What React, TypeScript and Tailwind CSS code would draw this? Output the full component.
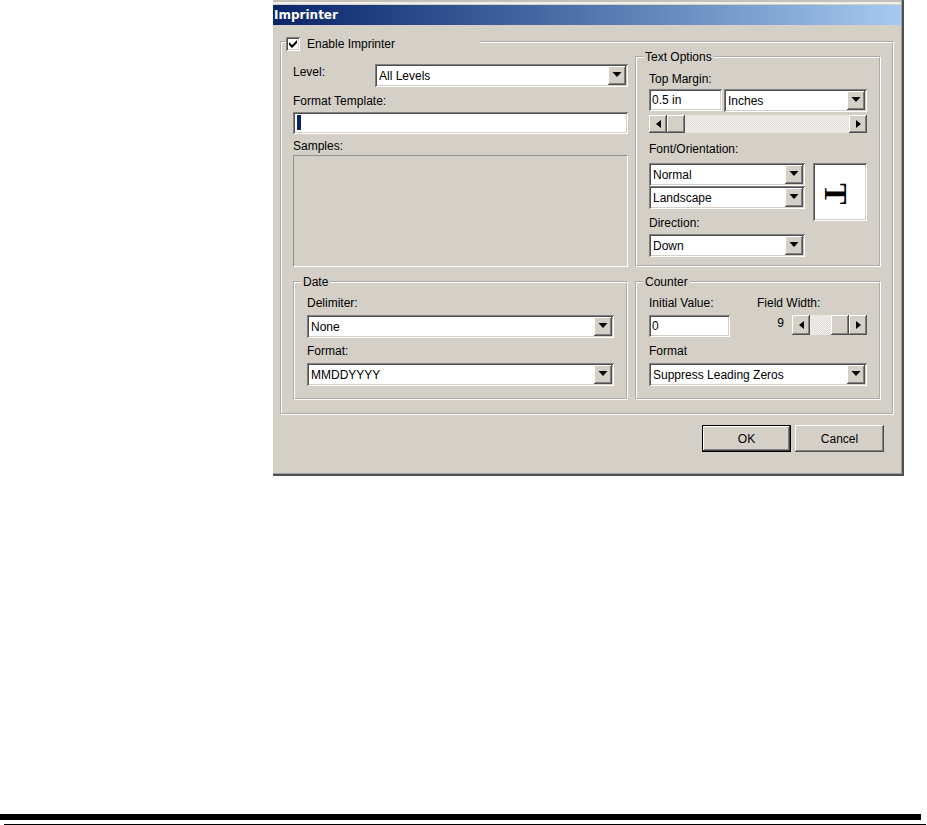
import { useState } from 'react';
import type { ReactNode } from 'react';
import clsx from 'clsx';

const sunken =
    'bg-white shadow-[inset_1px_1px_0_#808080,inset_-1px_-1px_0_#fff,inset_2px_2px_0_#505050,inset_-2px_-2px_0_#d4d0c8]';
const raised =
    'bg-[#d4d0c8] shadow-[inset_-1px_-1px_0_#505050,inset_1px_1px_0_#fff,inset_-2px_-2px_0_#808080]';
const groove = 'border-2 [border-style:groove] border-white min-w-0';

function Group({ title, className, children }: { title: string; className?: string; children: ReactNode }) {
    return (
        <fieldset className={clsx(groove, 'px-3', className)}>
            <legend className="-ml-1.5 px-0.5 leading-4">{title}</legend>
            {children}
        </fieldset>
    );
}

interface DropdownProps {
    id: string;
    label?: string;
    options: string[];
    className?: string;
}

function Dropdown({ id, label, options, className }: DropdownProps) {
    return (
        <div className={clsx('relative h-[23px]', className)}>
            <select
                id={id}
                aria-label={label}
                className={clsx('block h-full w-full appearance-none pl-1 pr-5 outline-none', sunken)}
            >
                {options.map((option) => (
                    <option key={option}>{option}</option>
                ))}
            </select>
            <span
                className={clsx(
                    'pointer-events-none absolute inset-y-0.5 right-0.5 flex w-[18px] items-center justify-center pb-0.5',
                    raised,
                )}
            >
                <svg width="10" height="5" viewBox="0 0 10 5" aria-hidden="true">
                    <path d="M0.5 0h9L5 5z" />
                </svg>
            </span>
        </div>
    );
}

interface ScrollBarProps {
    label: string;
    min: number;
    max: number;
    step: number;
    value: number;
    onChange: (value: number) => void;
    className?: string;
}

function ScrollBar({ label, min, max, step, value, onChange, className }: ScrollBarProps) {
    const move = (by: number) => onChange(Math.min(max, Math.max(min, value + by)));

    return (
        <div className={clsx('flex', className)}>
            <button
                type="button"
                aria-label={`Decrease ${label}`}
                onClick={() => move(-step)}
                className={clsx('flex w-[18px] shrink-0 items-center justify-center', raised)}
            >
                <svg width="5" height="8" viewBox="0 0 5 8" aria-hidden="true">
                    <path d="M5 0v8L0 4z" />
                </svg>
            </button>
            <input
                type="range"
                aria-label={label}
                min={min}
                max={max}
                step={step}
                value={value}
                onChange={(e) => onChange(Number(e.target.value))}
                className="h-full min-w-0 flex-1 appearance-none overflow-hidden bg-[repeating-conic-gradient(#f0eeeb_0_25%,#e2dfda_0_50%)] bg-[length:2px_2px] outline-none [&::-webkit-slider-runnable-track]:h-full [&::-webkit-slider-thumb]:h-full [&::-webkit-slider-thumb]:w-[18px] [&::-webkit-slider-thumb]:appearance-none [&::-webkit-slider-thumb]:bg-[#d4d0c8] [&::-webkit-slider-thumb]:shadow-[inset_-1px_-1px_0_#505050,inset_1px_1px_0_#fff,inset_-2px_-2px_0_#808080]"
            />
            <button
                type="button"
                aria-label={`Increase ${label}`}
                onClick={() => move(step)}
                className={clsx('flex w-[18px] shrink-0 items-center justify-center', raised)}
            >
                <svg width="5" height="8" viewBox="0 0 5 8" aria-hidden="true">
                    <path d="M0 0v8L5 4z" />
                </svg>
            </button>
        </div>
    );
}

export default function App() {
    const [enabled, setEnabled] = useState(true);
    const [margin, setMargin] = useState(0.5);
    const [fieldWidth, setFieldWidth] = useState(9);

    return (
        <div className="flex min-h-screen flex-col bg-white font-['Liberation_Sans',Arial,sans-serif] text-[12px] text-black">
            <form
                onSubmit={(e) => e.preventDefault()}
                className="ml-[273px] mr-[23px] border-b-2 border-r-2 border-[#505050] bg-[#d4d0c8] pt-[5px] shadow-[inset_-1px_-1px_0_#a0a0a0,inset_0_2px_0_#c4c0ba,inset_0_4px_0_#f0efec]"
            >
                {/* Title bar */}
                <h1 className="mr-px h-5 bg-linear-to-r from-[#0a246a] to-[#a6caf0] pl-px font-['DejaVu_Sans',sans-serif] text-[12px] font-bold leading-5 text-white">
                    Imprinter
                </h1>

                <fieldset className={clsx(groove, 'ml-[7px] mr-2 mt-[10px] pb-[13px] pl-[11px] pr-[11px]')}>
                    <legend className="-ml-[7px] h-[14px] w-[194px] pt-0.5">
                        <label className="flex items-center gap-[7px] leading-[14px]">
                            <span className="relative flex">
                                <input
                                    type="checkbox"
                                    checked={enabled}
                                    onChange={(e) => setEnabled(e.target.checked)}
                                    className={clsx('peer h-[14px] w-[14px] appearance-none', sunken)}
                                />
                                <svg
                                    className="pointer-events-none absolute inset-0 hidden peer-checked:block"
                                    width="14"
                                    height="14"
                                    viewBox="0 0 14 14"
                                    aria-hidden="true"
                                >
                                    <path d="M3 5l3 3 5-5v3l-5 5-3-3z" />
                                </svg>
                            </span>
                            Enable Imprinter
                        </label>
                    </legend>

                    <div className="grid grid-cols-[minmax(0,1fr)_246px] gap-x-[7px] gap-y-[7px]">
                        {/* Template and samples */}
                        <div className="flex flex-col pt-[15px] leading-4">
                            <div className="flex items-start">
                                <label htmlFor="level" className="w-[82px]">Level:</label>
                                <Dropdown id="level" options={['All Levels']} className="flex-1" />
                            </div>
                            <label htmlFor="template" className="mt-1.5">Format Template:</label>
                            <div className="relative mt-[3px]">
                                <input id="template" className={clsx('block h-[22px] w-full px-1 outline-none', sunken)} />
                                <span className="pointer-events-none absolute left-1 top-[3px] h-[15px] w-1 bg-[#0a246a]" />
                            </div>
                            <p className="mt-1">Samples:</p>
                            <div className="mt-px flex-1 border border-b-white border-l-[#909090] border-r-white border-t-[#909090]" />
                        </div>

                        <Group title="Text Options" className="pb-2">
                            <label htmlFor="top-margin" className="mt-1.5 block leading-4">Top Margin:</label>
                            <div className="mt-0.5 flex gap-0.5">
                                <input
                                    id="top-margin"
                                    value={`${margin} in`}
                                    readOnly
                                    className={clsx('h-[22px] w-[73px] px-[3px] outline-none', sunken)}
                                />
                                <Dropdown id="unit" label="Margin unit" options={['Inches']} className="flex-1" />
                            </div>
                            <ScrollBar
                                label="Top margin"
                                min={0.5}
                                max={10}
                                step={0.5}
                                value={margin}
                                onChange={setMargin}
                                className="mt-[3px] h-[18px]"
                            />
                            <label htmlFor="font" className="mt-2 block leading-4">Font/Orientation:</label>
                            <div className="mt-1.5 flex items-start gap-2">
                                <div className="flex-1">
                                    <Dropdown id="font" options={['Normal']} />
                                    <Dropdown id="orientation" label="Orientation" options={['Landscape']} />
                                    <label htmlFor="direction" className="mt-1.5 block leading-4">Direction:</label>
                                    <Dropdown id="direction" options={['Down']} className="mt-[3px]" />
                                </div>
                                <div className={clsx('flex h-[58px] w-[54px] items-center justify-center pr-2 pt-1', sunken)}>
                                    <span className="rotate-90 font-['Liberation_Serif',serif] text-[32px] font-bold leading-none">
                                        T
                                    </span>
                                </div>
                            </div>
                        </Group>

                        <Group title="Date" className="pb-3">
                            <label htmlFor="delimiter" className="mt-[5px] block leading-4">Delimiter:</label>
                            <Dropdown id="delimiter" options={['None']} className="mt-1" />
                            <label htmlFor="date-format" className="mt-[5px] block leading-4">Format:</label>
                            <Dropdown id="date-format" options={['MMDDYYYY']} className="mt-1" />
                        </Group>

                        <Group title="Counter" className="pb-3">
                            <div className="mt-[5px] flex leading-4">
                                <label htmlFor="initial" className="w-[108px]">Initial Value:</label>
                                <span>Field Width:</span>
                            </div>
                            <div className="mt-1 flex h-[23px] items-start">
                                <input
                                    id="initial"
                                    defaultValue="0"
                                    className={clsx('h-[22px] w-[81px] px-[3px] outline-none', sunken)}
                                />
                                <output className="flex-1 pr-2 text-right leading-4">{fieldWidth}</output>
                                <ScrollBar
                                    label="Field width"
                                    min={1}
                                    max={9}
                                    step={1}
                                    value={fieldWidth}
                                    onChange={setFieldWidth}
                                    className="h-5 w-[75px]"
                                />
                            </div>
                            <label htmlFor="counter-format" className="mt-[5px] block leading-4">Format</label>
                            <Dropdown id="counter-format" options={['Suppress Leading Zeros']} className="mt-1" />
                        </Group>
                    </div>
                </fieldset>

                {/* Actions */}
                <div className="mb-[22px] mr-[18px] mt-[10px] flex justify-end gap-1">
                    <button
                        type="submit"
                        className="h-[27px] w-[89px] border border-black bg-[#d4d0c8] shadow-[inset_-1px_-1px_0_#404040,inset_1px_1px_0_#fff,inset_-2px_-2px_0_#808080]"
                    >
                        OK
                    </button>
                    <button type="button" className={clsx('h-[27px] w-[89px]', raised)}>
                        Cancel
                    </button>
                </div>
            </form>

            {/* Page rules */}
            <footer className="mt-auto">
                <div className="mr-1.5 h-1.5 bg-black" />
                <div className="ml-1 mr-px mt-1 h-px bg-black" />
            </footer>
        </div>
    );
}
